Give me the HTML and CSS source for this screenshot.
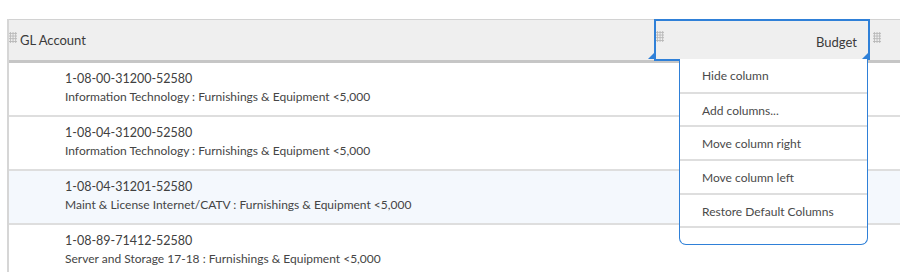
FILE: index.html
```html
<!DOCTYPE html>
<html>
<head>
<meta charset="utf-8">
<link rel="stylesheet" href="styles.css">
</head>
<body>
<div class="grid">
  <div class="head">
    <div class="hcell gl">
      <span class="grip"></span>
      <span class="htext">GL Account</span>
      <span class="corner"></span>
    </div>
    <div class="hcell budget">
      <span class="grip"></span>
      <span class="htext right">Budget</span>
      <span class="corner"></span>
    </div>
    <div class="hcell extra">
      <span class="grip"></span>
    </div>
  </div>
  <div class="row">
    <div class="code">1-08-00-31200-52580</div>
    <div class="desc">Information Technology : Furnishings &amp; Equipment &lt;5,000</div>
  </div>
  <div class="row">
    <div class="code">1-08-04-31200-52580</div>
    <div class="desc">Information Technology : Furnishings &amp; Equipment &lt;5,000</div>
  </div>
  <div class="row hl">
    <div class="code">1-08-04-31201-52580</div>
    <div class="desc">Maint &amp; License Internet/CATV : Furnishings &amp; Equipment &lt;5,000</div>
  </div>
  <div class="row">
    <div class="code">1-08-89-71412-52580</div>
    <div class="desc">Server and Storage 17-18 : Furnishings &amp; Equipment &lt;5,000</div>
  </div>
  <ul class="menu">
    <li>Hide column</li>
    <li>Add columns...</li>
    <li>Move column right</li>
    <li>Move column left</li>
    <li>Restore Default Columns</li>
    <li class="empty"></li>
  </ul>
</div>
</body>
</html>
```
FILE: styles.css
```css
html, body {
  margin: 0;
  padding: 0;
  background: #fff;
  overflow: hidden;
}
body {
  font-family: "Lato", "Noto Sans", sans-serif;
  color: #333;
  width: 900px;
  height: 272px;
}
.grid {
  position: relative;
  margin: 19px 0 0 7px;
  width: 893px;
  height: 253px;
  overflow: hidden;
  box-sizing: border-box;
  border-left: 2px solid #d6d6d6;
}
.head {
  display: flex;
  height: 40px;
  background: #efefef;
  border-top: 1px solid #d2d2d2;
  border-bottom: 3px solid #c6c6c6;
}
.hcell {
  position: relative;
  display: flex;
  align-items: center;
  box-sizing: border-box;
  height: 40px;
}
.gl {
  width: 645px;
}
.budget {
  width: 216px;
  border: 2px solid #2f80d8;
  border-bottom: 0;
  margin-top: -1px;
  height: 41px;
  padding-right: 11px;
}
.extra {
  flex: 1;
  padding-left: 3px;
}
.grip {
  width: 8px;
  height: 11px;
  margin-top: -6px;
  background-image: radial-gradient(circle, #b8b8b8 0.9px, transparent 1.1px);
  background-size: 2.7px 2.7px;
  flex: none;
}
.budget .grip { margin-top: -8px; }
.htext {
  font-size: 13px;
  margin-left: 3px;
  color: #3a3a3a;
}
.htext.right {
  margin-left: auto;
  margin-top: 2px;
}
.corner {
  position: absolute;
  right: 0;
  bottom: 1px;
  width: 0;
  height: 0;
  border-style: solid;
  border-width: 0 0 6px 6px;
  border-color: transparent transparent #2f80d8 transparent;
}
.row {
  box-sizing: border-box;
  height: 54px;
  padding: 6px 0 0 56px;
  border-bottom: 2px solid #dedede;
}
.row.hl { background: #f4f8fd; }
.code {
  font-size: 12.5px;
  line-height: 19px;
  color: #404040;
}
.desc {
  font-size: 12px;
  line-height: 18px;
  color: #454545;
}
.menu {
  position: absolute;
  left: 670px;
  top: 40px;
  width: 189px;
  box-sizing: border-box;
  margin: 0;
  padding: 0;
  list-style: none;
  background: #fff;
  border: 1px solid #2f80d8;
  border-top: 0;
  border-radius: 0 0 7px 7px;
}
.menu::before {
  content: "";
  position: absolute;
  left: -26px;
  top: 0;
  width: 26px;
  height: 2px;
  background: #2f80d8;
}
.menu li {
  height: 33.7px;
  box-sizing: border-box;
  padding-left: 22px;
  font-size: 12px;
  line-height: 33px;
  color: #4a4a4a;
  border-bottom: 2px solid #dedede;
}
.menu li:first-child { height: 34.5px; }
.menu li.empty {
  border-bottom: 0;
  height: 16px;
}
```
